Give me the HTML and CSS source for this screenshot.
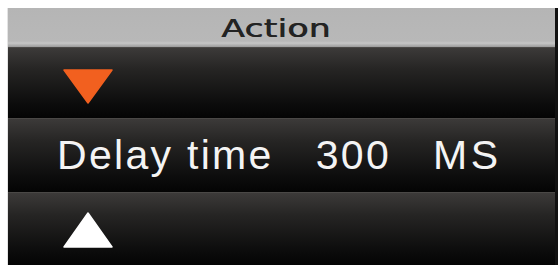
FILE: index.html
```html
<!DOCTYPE html>
<html>
<head>
<meta charset="utf-8">
<link rel="stylesheet" href="styles.css">
</head>
<body>
<div class="panel">
  <div class="header"><span class="title">Action</span></div>
  <div class="row row-down">
    <svg class="tri" width="50" height="35" viewBox="0 0 50 35"><polygon points="1,1 49,1 25,34" fill="#f2601f" stroke="#f2601f" stroke-width="1.5" stroke-linejoin="round"/></svg>
  </div>
  <div class="row row-value">
    <span class="word">Delay time</span>
    <span class="word">300</span>
    <span class="word">MS</span>
  </div>
  <div class="row row-up">
    <svg class="tri" width="50" height="36" viewBox="0 0 50 36"><polygon points="25,1 49,35 1,35" fill="#ffffff" stroke="#ffffff" stroke-width="1.5" stroke-linejoin="round"/></svg>
  </div>
</div>
</body>
</html>
```

FILE: styles.css
```css
html, body {
  margin: 0;
  padding: 0;
  background: #ffffff;
}

.panel {
  margin: 8px 0 0 8px;
  width: 547px;
  border-right: 3px solid #111;
  box-shadow: 0 1px 0 #c8c8c8, -1px 0 0 #e4e4e4;
  display: flex;
  flex-direction: column;
}

.header {
  height: 39px;
  box-sizing: border-box;
  background: linear-gradient(#b5b5b5, #b8b8b8 85%, #c6c6c6 90%, #9a9a9a 100%);
  display: flex;
  align-items: center;
  justify-content: center;
  padding-right: 12px;
}

.title {
  display: inline-block;
  font-family: "DejaVu Sans", sans-serif;
  font-size: 25px;
  color: #232323;
  transform: scaleX(1.38);
  letter-spacing: 0.2px;
  text-shadow: 0.6px 0 0 #232323;
  margin-top: 2px;
}

.row {
  box-sizing: border-box;
  display: flex;
  align-items: center;
  background: linear-gradient(#3c3a39 0%, #262524 30%, #0c0c0c 80%, #040404 100%);
  border-top: 1px solid #4a4846;
}

.row-down {
  height: 71px;
  padding-left: 55px;
  padding-top: 6px;
}

.row-value {
  height: 74px;
  padding-left: 49px;
  gap: 42px;
}

.row-up {
  height: 73px;
  padding-left: 55px;
  padding-top: 2px;
}

.tri {
  display: block;
}

.word {
  font-family: "Liberation Sans", Arial, sans-serif;
  font-size: 41px;
  letter-spacing: 2.3px;
  color: #f4f4f4;
  white-space: pre;
}

.word:last-child {
  letter-spacing: 3.5px;
}
```
